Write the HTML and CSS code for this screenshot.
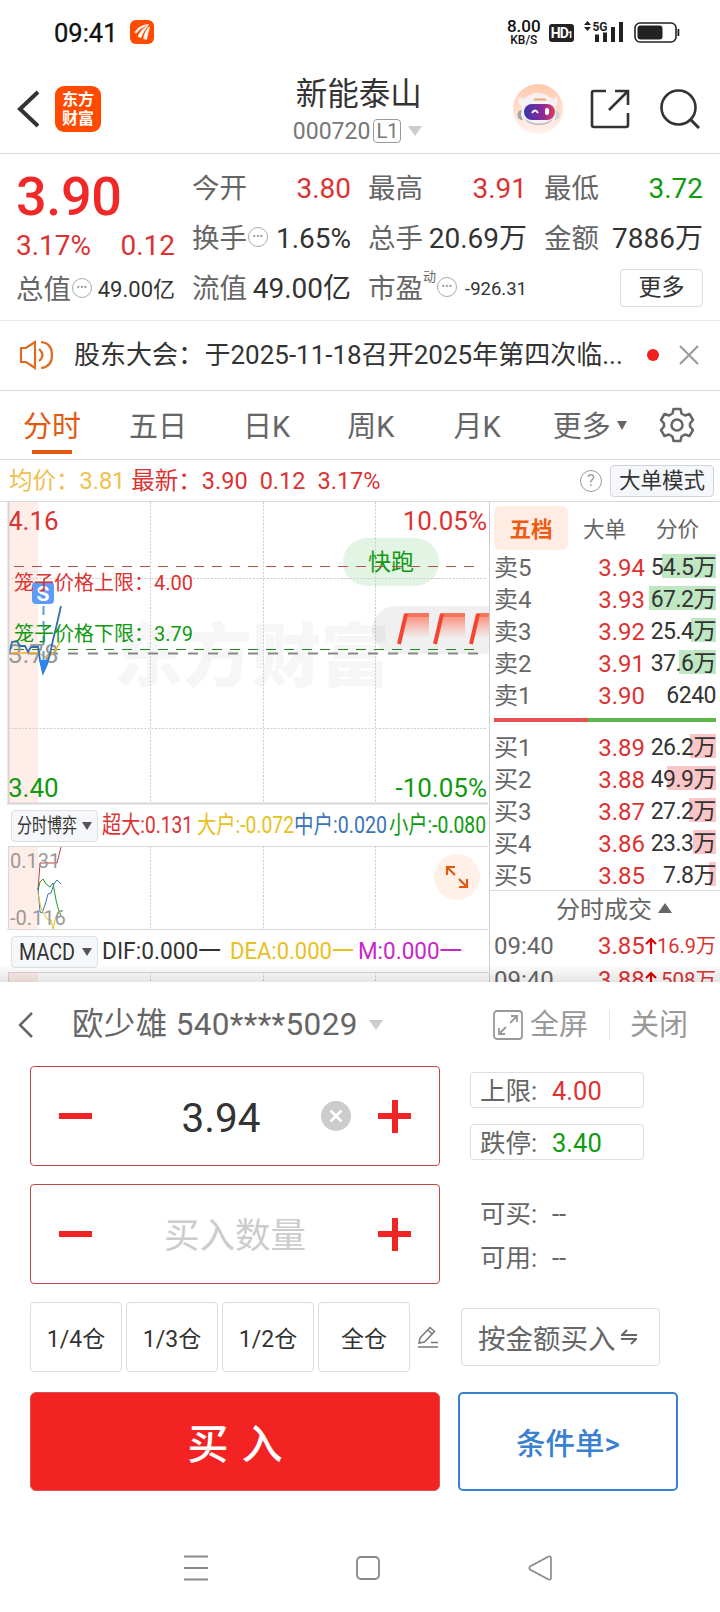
FILE: index.html
```html
<!DOCTYPE html>
<html lang="zh-CN">

<head>
    <meta charset="UTF-8">
    <meta name="viewport" content="width=device-width, initial-scale=1.0">

    <title>新能泰山 000720</title>
    <link rel="stylesheet" href="styles.css">
</head>

<body>

    <div class="status-bar">
        <span class="clock">09:41</span>
        <svg class="status-app" width="24" height="24" viewBox="0 0 24 24">
            <rect width="24" height="24" rx="6" fill="#ff4a00" />
            <path d="M5 12.500C7 8 12 5 18.500 4.500C13 7 9 9 6.500 13ZM8 16.500C10 11.500 14 7.500 18.500 5.500C15 9 12.500 13 11 17.500ZM13.500 18.500C14.500 13 16.500 9 19.500 7C18.800 10 17.800 14.500 16.500 19.500Z" fill="#fff" stroke="#fff" stroke-width="0.600" />
        </svg>
        <div class="net-speed">
            <span class="net-value">8.00</span>
            <span class="net-unit">KB/S</span>
        </div>
        <span class="hd">HD<small>1</small></span>
        <svg class="signal" width="42" height="24" viewBox="0 0 42 24">
            <path d="M4.500 1L8 5H1ZM1 7H8L4.500 11Z" fill="#222" />
            <text x="9.500" y="11" class="signal-text" textLength="15" lengthAdjust="spacingAndGlyphs">5G</text>
            <rect x="12" y="14.500" width="4" height="7.500" fill="#222" />
            <rect x="20" y="12.500" width="4" height="9.500" fill="#222" />
            <rect x="28" y="7" width="4" height="15" fill="#222" />
            <rect x="36" y="2" width="4" height="20" fill="#222" />
        </svg>
        <svg class="battery" width="46" height="22" viewBox="0 0 46 22">
            <rect x="1" y="1" width="41" height="19" rx="5" fill="none" stroke="#222" stroke-width="1.600" />
            <rect x="3.500" y="3.500" width="25" height="14" rx="3" fill="#222" />
            <rect x="43.500" y="7" width="1.800" height="7" fill="#222" />
        </svg>
    </div>

    <div class="header">
        <svg class="back" width="24" height="38" viewBox="0 0 24 38">
            <path d="M21 2L3 19L21 36" fill="none" stroke="#333" stroke-width="4" />
        </svg>
        <div class="logo">东方<br>财富</div>
        <div class="stock">
            <div class="stock-name">新能泰山</div>
            <div class="stock-code">000720<span class="level">L1</span><i class="arrow-down"></i></div>
        </div>
        <svg class="robot" width="50" height="50" viewBox="0 0 50 50">
            <defs>
                <linearGradient id="robotBg" x1="0" y1="0" x2="0" y2="1">
                    <stop offset="0" stop-color="#ffc8ab" />
                    <stop offset="1" stop-color="#fff3ee" />
                </linearGradient>
                <linearGradient id="robotFace" x1="0" y1="0" x2="1" y2="0">
                    <stop offset="0" stop-color="#3a35a8" />
                    <stop offset="0.600" stop-color="#8a2a98" />
                    <stop offset="1" stop-color="#d8405a" />
                </linearGradient>
            </defs>
            <circle cx="25" cy="25" r="25" fill="url(#robotBg)" />
            <ellipse cx="8.500" cy="31" rx="4" ry="5" fill="#a9a5ad" />
            <ellipse cx="42" cy="31" rx="4.500" ry="5" fill="#d5d0d6" />
            <path d="M5 12Q7 16 12 14Q25 4 38 14Q42 16 44 12Q46 19 42 23L43 31Q42 41 26 41Q10 41 8 31L9 23Q4 19 5 12Z" fill="#f5f1f3" />
            <path d="M12 35Q25 44 40 35Q36 41 26 41Q15 41 12 35Z" fill="#bdb8c2" />
            <rect x="11" y="20" width="31" height="16" rx="8" fill="url(#robotFace)" />
            <path d="M19 29Q22 24 25 29" fill="none" stroke="#fff" stroke-width="2" />
            <rect x="32" y="24" width="4" height="7" rx="2" fill="#fff" />
            <path d="M20 16.500L22 14.500H32L34 16.500Z" fill="#e3a56f" />
        </svg>
        <svg class="share" width="40" height="40" viewBox="0 0 40 40">
            <path d="M16 2H4Q2 2 2 4V36Q2 38 4 38H36Q38 38 38 36V24M25 2H38V16M38 2L19 21" fill="none" stroke="#333" stroke-width="2.600" />
        </svg>
        <svg class="search" width="40" height="40" viewBox="0 0 40 40">
            <circle cx="18.500" cy="18.500" r="17" fill="none" stroke="#333" stroke-width="2.600" />
            <path d="M30.500 30.500L39 39" stroke="#333" stroke-width="3" />
        </svg>
    </div>

    <div class="quote">
        <div class="quote-main">
            <div class="price">3.90</div>
            <div class="pair red"><span>3.17%</span><span>0.12</span></div>
            <div class="pair"><label>总值<i class="dots">•••</i></label><span class="mid">49.00亿</span></div>
        </div>
        <div class="quote-col">
            <div class="pair"><label>今开</label><span class="red">3.80</span></div>
            <div class="pair"><label>换手<i class="dots">•••</i></label><span>1.65%</span></div>
            <div class="pair"><label>流值</label><span>49.00亿</span></div>
        </div>
        <div class="quote-col">
            <div class="pair"><label>最高</label><span class="red">3.91</span></div>
            <div class="pair"><label>总手</label><span>20.69万</span></div>
            <div class="pair"><label>市盈<sup>动</sup><i class="dots">•••</i></label><span class="small">-926.31</span></div>
        </div>
        <div class="quote-col">
            <div class="pair"><label>最低</label><span class="green">3.72</span></div>
            <div class="pair"><label>金额</label><span>7886万</span></div>
            <div class="pair pair-end"><button class="more">更多</button></div>
        </div>
    </div>

    <div class="news">
        <svg width="36" height="30" viewBox="0 0 36 30">
            <path d="M2 8H7L16 2V28L7 22H2ZM20 9Q27 15 20 21M22 2Q33 3 33 15Q33 27 22 28" fill="none" stroke="#e06a20" stroke-width="2.200" />
        </svg>
        <span class="news-text">股东大会： 于2025-11-18召开2025年第四次临...</span>
        <i class="news-dot"></i>
        <svg class="news-close" width="20" height="20" viewBox="0 0 20 20">
            <path d="M1 1L19 19M19 1L1 19" stroke="#999" stroke-width="2" />
        </svg>
    </div>

    <div class="tabs">
        <span class="tab active">分时</span>
        <span class="tab">五日</span>
        <span class="tab">日K</span>
        <span class="tab">周K</span>
        <span class="tab">月K</span>
        <span class="tab tab-more">更多<i></i></span>
        <svg class="gear" width="36" height="36" viewBox="0 0 36 36">
            <path d="M14.500 2H21.500L22.500 6.500L26 8.500L30.500 7L34 13L31 16.500V19.500L34 23L30.500 29L26 27.500L22.500 29.500L21.500 34H14.500L13.500 29.500L10 27.500L5.500 29L2 23L5 19.500V16.500L2 13L5.500 7L10 8.500L13.500 6.500Z" fill="none" stroke="#666" stroke-width="2.500" stroke-linejoin="round" />
            <circle cx="18" cy="18" r="5.500" fill="none" stroke="#666" stroke-width="2.500" />
        </svg>
    </div>

    <div class="average">
        <span class="yellow avg-price">均价：3.81</span>
        <span class="red">最新：3.90</span>
        <span class="red">0.12</span>
        <span class="red">3.17%</span>
        <i class="help">?</i>
        <button class="mode">大单模式</button>
    </div>

    <div class="market">
        <div class="charts">
            <svg class="chart" width="489" height="303" viewBox="0 502 489 303">
                <defs>
                    <linearGradient id="fade" x1="0" y1="0" x2="0" y2="1">
                        <stop offset="0" stop-color="#fb8f7e" />
                        <stop offset="1" stop-color="#fb8f7e" stop-opacity="0" />
                    </linearGradient>
                    <g id="slash">
                        <path d="M7 2H31V25H2Z" fill="url(#fade)" />
                        <path d="M7 2H31" stroke="#f7745f" stroke-width="4" />
                        <path d="M1 31L8 1" stroke="#f54530" stroke-width="4" />
                    </g>
                </defs>
                <rect x="9" y="502" width="29" height="301" fill="#ffeee8" />
                <text x="114" y="681" class="watermark" textLength="276">东方财富</text>
                <path d="M150.500 502V803M263.500 502V803M375.500 502V803M8 578.500H487M8 728.500H487" class="grid" />
                <path d="M489 606H396A24 24 0 0 0 396 654H489Z" fill="#000" opacity="0.060" />
                <use href="#slash" x="398" y="613" />
                <use href="#slash" x="434" y="613" />
                <use href="#slash" x="470" y="613" />
                <rect x="343" y="538" width="96" height="48" rx="24" fill="#e2f5e4" />
                <path d="M375.500 538V586M343 578.500H439" class="grid" />
                <text x="391" y="570" text-anchor="middle" class="run">快跑</text>
                <path d="M14 566.500H474" stroke="#b5504c" stroke-dasharray="10 8" />
                <path d="M14 649.500H474" stroke="#1d8a1d" stroke-dasharray="10 8" />
                <path d="M8 653.500H480" stroke="#888" stroke-width="2" stroke-dasharray="10 10" />
                <text x="8" y="530" class="axis red">4.16</text>
                <text x="487" y="530" class="axis red" text-anchor="end">10.05%</text>
                <text x="8" y="663" class="axis gray">3.78</text>
                <text x="8" y="797" class="axis green">3.40</text>
                <text x="487" y="797" class="axis green" text-anchor="end">-10.05%</text>
                <path d="M9 653H39L45 657L51 655L56 649L60 642" fill="none" stroke="#f5b030" stroke-width="1.500" />
                <path d="M9 654L12 642L17 641L20 646L25 646L28 652L31 647H38L40 660L43 673L47 664L50 654L53 640L56 628L61 606" fill="none" stroke="#2f6fb8" stroke-width="1.800" />
                <path d="M39 660H48L43.500 674Z" fill="#2a85f5" />
                <path d="M43.500 606V662" stroke="#5a9be0" stroke-width="2" stroke-dasharray="9 6" />
                <rect x="32" y="582" width="22" height="22" rx="4" fill="#5c9cf7" />
                <text x="43" y="600.500" text-anchor="middle" class="sell-mark">S</text>
                <text x="14" y="589.500" class="cage red">笼子价格上限：4.00</text>
                <text x="14" y="640.500" class="cage green">笼子价格下限：3.79</text>
                <path d="M8.500 502V804M7 803.500H488" class="frame" />
            </svg>

            <div class="indicator">
                <button class="select">
                    <svg width="60" height="26"><text x="0" y="20" textLength="60" lengthAdjust="spacingAndGlyphs">分时博弈</text></svg><i></i>
                </button>
                <svg class="legend" width="388" height="40">
                    <text x="2" y="27" class="red" textLength="91" lengthAdjust="spacingAndGlyphs">超大:0.131</text>
                    <text x="97" y="27" class="gold" textLength="97" lengthAdjust="spacingAndGlyphs">大户:-0.072</text>
                    <text x="194" y="27" class="blue" textLength="93" lengthAdjust="spacingAndGlyphs">中户:0.020</text>
                    <text x="289" y="27" class="green" textLength="97" lengthAdjust="spacingAndGlyphs">小户:-0.080</text>
                </svg>
            </div>

            <svg class="chart" width="489" height="85" viewBox="0 846 489 85">
                <rect x="9" y="846" width="29" height="83" fill="#ffeee8" />
                <path d="M150.500 846V929M263.500 846V929M375.500 846V929" class="grid" />
                <path d="M38 890L40 863H57L61 847" fill="none" stroke="#c83c3c" />
                <path d="M38 890L40 882L43 879L46 884L50 887L53 883L56 900L58 908L61 916" fill="none" stroke="#1d9a1d" />
                <path d="M38 888L40 912L42 913L45 905L48 894L51 893L54 884L57 880L61 884" fill="none" stroke="#3a74b8" />
                <path d="M38 893L41 908L44 914L47 919L51 920L53 929L56 916L61 911" fill="none" stroke="#e8c020" />
                <text x="10" y="868" class="axis-small">0.131</text>
                <text x="10" y="925" class="axis-small">-0.116</text>
                <circle cx="457" cy="877" r="23" fill="#fff0e8" />
                <path d="M447 875V867H455M447 867L455 875M459 879L467 887M459 887H467V879" fill="none" stroke="#dd5a10" stroke-width="2.200" />
                <path d="M8 846.500H488M8.500 846V930M7 929.500H488" class="frame-thin" />
            </svg>

            <div class="indicator">
                <button class="select">
                    <svg width="60" height="26"><text x="2" y="21" textLength="56" lengthAdjust="spacingAndGlyphs" class="macd">MACD</text></svg><i></i>
                </button>
                <svg class="legend" width="388" height="40">
                    <text x="2" y="27" class="black" textLength="119" lengthAdjust="spacingAndGlyphs">DIF:0.000一</text>
                    <text x="130" y="27" class="gold" textLength="124" lengthAdjust="spacingAndGlyphs">DEA:0.000一</text>
                    <text x="258" y="27" class="purple" textLength="104" lengthAdjust="spacingAndGlyphs">M:0.000一</text>
                </svg>
            </div>

            <svg class="chart" width="489" height="11" viewBox="0 972 489 11">
                <rect x="9" y="972" width="29" height="11" fill="#ffeee8" />
                <path d="M150.500 972V983M263.500 972V983M375.500 972V983" class="grid" />
                <path d="M8 972.500H488M8.500 972V983" class="frame-thin" />
            </svg>
        </div>

        <div class="book">
            <div class="book-tabs">
                <span class="active">五档</span>
                <span>大单</span>
                <span>分价</span>
            </div>
            <div class="level-row sell"><span>卖5</span><span class="red">3.94</span><b><i style="width: 54px"></i>54.5万</b></div>
            <div class="level-row sell"><span>卖4</span><span class="red">3.93</span><b><i style="width: 67px"></i>67.2万</b></div>
            <div class="level-row sell"><span>卖3</span><span class="red">3.92</span><b><i style="width: 25px"></i>25.4万</b></div>
            <div class="level-row sell"><span>卖2</span><span class="red">3.91</span><b><i style="width: 37px"></i>37.6万</b></div>
            <div class="level-row sell"><span>卖1</span><span class="red">3.90</span><b>6240</b></div>
            <div class="ratio"><i style="width: 94px"></i></div>
            <div class="level-row buy"><span>买1</span><span class="red">3.89</span><b><i style="width: 26px"></i>26.2万</b></div>
            <div class="level-row buy"><span>买2</span><span class="red">3.88</span><b><i style="width: 49px"></i>49.9万</b></div>
            <div class="level-row buy"><span>买3</span><span class="red">3.87</span><b><i style="width: 27px"></i>27.2万</b></div>
            <div class="level-row buy"><span>买4</span><span class="red">3.86</span><b><i style="width: 23px"></i>23.3万</b></div>
            <div class="level-row buy"><span>买5</span><span class="red">3.85</span><b><i style="width: 7px"></i>7.8万</b></div>
            <div class="deals-title">分时成交<i></i></div>
            <div class="deal"><span>09:40</span><span class="red">3.85</span><svg width="12" height="18" viewBox="0 0 12 18"><path d="M6 17V2M1 7L6 2L11 7" fill="none" stroke="#e00000" stroke-width="2.200" /></svg><em>16.9万</em></div>
            <div class="deal"><span>09:40</span><span class="red">3.88</span><svg width="12" height="18" viewBox="0 0 12 18"><path d="M6 17V2M1 7L6 2L11 7" fill="none" stroke="#e00000" stroke-width="2.200" /></svg><em class="wide">508万</em></div>
        </div>
    </div>

    <div class="trade">
        <div class="account">
            <svg width="16" height="28" viewBox="0 0 16 28">
                <path d="M14 2L2 14L14 26" fill="none" stroke="#666" stroke-width="2.500" />
            </svg>
            <span class="account-name">欧少雄 540****5029</span>
            <i class="arrow-down"></i>
            <svg class="full-icon" width="30" height="30" viewBox="0 0 30 30">
                <rect x="1" y="1" width="28" height="28" rx="3" fill="none" stroke="#999" stroke-width="1.800" />
                <path d="M18 6H24V12M24 6L17 13M6 18V24H12M6 24L13 17" fill="none" stroke="#999" stroke-width="1.800" />
            </svg>
            <span class="full">全屏</span>
            <span class="close">关闭</span>
        </div>

        <div class="order">
            <div class="order-left">
                <div class="stepper">
                    <i class="minus"></i>
                    <span class="value">3.94</span>
                    <svg class="clear" width="30" height="30" viewBox="0 0 30 30">
                        <circle cx="15" cy="15" r="15" fill="#ccc" />
                        <path d="M9.500 9.500L20.500 20.500M20.500 9.500L9.500 20.500" stroke="#fff" stroke-width="2.500" />
                    </svg>
                    <i class="plus"></i>
                </div>
                <div class="stepper">
                    <i class="minus"></i>
                    <span class="value placeholder">买入数量</span>
                    <i class="plus"></i>
                </div>
            </div>
            <div class="order-right">
                <div class="limit"><span>上限:</span><span class="red">4.00</span></div>
                <div class="limit"><span>跌停:</span><span class="green">3.40</span></div>
                <div class="available first"><span>可买:</span><span>--</span></div>
                <div class="available"><span>可用:</span><span>--</span></div>
            </div>
        </div>

        <div class="positions">
            <button>1/4仓</button>
            <button>1/3仓</button>
            <button>1/2仓</button>
            <button>全仓</button>
            <svg class="edit" width="22" height="22" viewBox="0 0 22 22">
                <path d="M1 21H21M14 16.500H21M2 17L3 12L13 1.500L17.500 5.500L7.500 16ZM11 4L15 8" fill="none" stroke="#777" stroke-width="1.500" />
            </svg>
            <button class="by-amount">按金额买入<svg width="16" height="16" viewBox="0 0 16 16">
                    <path d="M16 6H1L6 1M0 10H15L10 15" fill="none" stroke="#666" stroke-width="2" />
                </svg></button>
        </div>

        <div class="actions">
            <button class="buy-btn">买 入</button>
            <button class="cond-btn">条件单&gt;</button>
        </div>
    </div>

    <div class="nav">
        <svg width="24" height="26" viewBox="0 0 24 26">
            <path d="M0 1.500H24M0 13H24M0 24.500H24" stroke="#888" stroke-width="1.800" />
        </svg>
        <svg width="24" height="26" viewBox="0 0 24 26">
            <rect x="1" y="2" width="22" height="22" rx="4" fill="none" stroke="#888" stroke-width="1.800" />
        </svg>
        <svg width="24" height="26" viewBox="0 0 24 26">
            <path d="M2 11.500Q0.500 13 2 14.500L20.500 24.500Q23 25 23 23V3Q23 1 20.500 1.500Z" fill="none" stroke="#888" stroke-width="1.600" />
        </svg>
    </div>

</body>

</html>
```

FILE: styles.css
```css
* {
    box-sizing: border-box;
}

body {
    margin: 0;
    width: 720px;
    height: 1612px;
    overflow: hidden;
    background-color: #fff;
    color: #333;
    font-family: Roboto, 'Noto Sans CJK SC', sans-serif;
}

svg {
    display: block;
    flex-shrink: 0;
}

i,
em {
    font-style: normal;
}

button {
    background-color: #fff;
    font-family: inherit;
    color: #333;
    padding: 0;
    border: 1px solid #ddd;
    border-radius: 4px;
}

.red {
    color: #dc3232;
    fill: #dc3232;
}

.green {
    color: #109a10;
    fill: #109a10;
}

.yellow {
    color: #efc050;
}

.gold {
    fill: #e8c020;
}

.blue {
    fill: #3a74b8;
}

.purple {
    fill: #c828c8;
}

.black {
    fill: #333;
}

.gray {
    fill: #999;
}

/* status bar */
.status-bar {
    display: flex;
    align-items: center;
    height: 64px;
    padding: 0 40px 0 54px;
    color: #111;
}

.clock {
    width: 78px;
    font-size: 25.5px;
    line-height: 26px;
    padding-top: 2px;
    -webkit-text-stroke: 0.3px #111;
}

.net-speed {
    display: flex;
    flex-direction: column;
    align-items: center;
    margin-left: 353px;
    width: 34px;
    font-weight: 500;
}

.net-value {
    font-size: 17px;
    line-height: 15px;
}

.net-unit {
    font-size: 12px;
    line-height: 12px;
}

.hd {
    width: 26px;
    height: 18px;
    margin-left: 8px;
    margin-top: 2px;
    border-radius: 3px;
    background-color: #222;
    color: #fff;
    font-size: 14px;
    font-weight: 700;
    line-height: 19px;
    text-align: center;
    letter-spacing: -1px;
}

.hd small {
    font-size: 9px;
}

.signal {
    margin-left: 9px;
}

.signal-text {
    font-size: 13px;
    font-weight: 700;
    fill: #222;
}

.battery {
    margin-left: 9px;
    margin-top: 1px;
}

/* header */
.header {
    display: flex;
    align-items: center;
    height: 90px;
    padding: 0 20px 0 17px;
    border-bottom: 1px solid #d8d8d8;
}

.logo {
    width: 46px;
    height: 46px;
    margin-left: 14px;
    padding-top: 4px;
    border-radius: 9px;
    background-color: #ff4a00;
    color: #fff;
    font-size: 16px;
    font-weight: 700;
    line-height: 19px;
    text-align: center;
}

.stock {
    width: 260px;
    margin-left: 120px;
    margin-right: 33px;
    padding-top: 7px;
}

.stock-name {
    height: 38px;
    padding-left: 75px;
    font-size: 31.5px;
    line-height: 38px;
}

.stock-code {
    display: flex;
    align-items: center;
    height: 35px;
    padding-left: 72px;
    font-size: 23px;
    line-height: 35px;
    color: #777;
}

.level {
    width: 28px;
    height: 24px;
    margin-left: 3px;
    border: 1.5px solid #999;
    border-radius: 4px;
    font-size: 20px;
    line-height: 22px;
    text-align: center;
}

.arrow-down {
    margin-left: 7px;
    border: 7.5px solid transparent;
    border-top: 10px solid #ccc;
    border-bottom: 0;
}

.share {
    margin-left: 27px;
}

.search {
    margin-left: 30px;
}

/* quote */
.quote {
    display: grid;
    grid-template-columns: 159px 159px 159px 159px;
    column-gap: 17px;
    height: 167px;
    padding: 10px 0 0 16px;
    border-bottom: 1px solid #e8e8e8;
}

.pair {
    display: flex;
    align-items: center;
    justify-content: space-between;
    height: 50px;
    font-size: 28px;
    line-height: 50px;
    white-space: nowrap;
}

.pair-end {
    justify-content: flex-end;
}

.pair label {
    display: flex;
    align-items: center;
    color: #666;
    font-size: 27.5px;
}

.quote-main .pair {
    height: 42px;
    line-height: 44px;
}

.quote-main .price {
    height: 61px;
    color: #f02828;
    font-size: 54px;
    font-weight: 500;
    line-height: 66px;
    letter-spacing: -0.4px;
}

.quote-main .pair:last-child {
    height: 46px;
}

.pair .mid {
    font-size: 22px;
}

.pair .small {
    font-size: 18.5px;
}

.dots {
    width: 20px;
    height: 20px;
    margin-left: 1px;
    margin-top: -4px;
    border: 1.5px solid #aaa;
    border-radius: 50%;
    color: #999;
    font-size: 10px;
    line-height: 18px;
    letter-spacing: 0.3px;
    text-align: center;
}

.pair sup {
    align-self: flex-start;
    font-size: 13px;
    line-height: 26px;
    margin: 0;
}

.more {
    width: 83px;
    height: 38px;
    margin-top: -3px;
    font-size: 23px;
    line-height: 34px;
}

/* news */
.news {
    display: flex;
    align-items: center;
    height: 70px;
    padding: 0 21px 1px 19px;
    border-bottom: 1px solid #d8d8d8;
}

.news-text {
    width: 572px;
    padding-left: 19px;
    font-size: 26px;
    line-height: 40px;
    word-spacing: -6px;
    white-space: nowrap;
}

.news-dot {
    width: 12px;
    height: 12px;
    margin-left: 20px;
    border-radius: 50%;
    background-color: #f02020;
}

.news-close {
    margin-left: 20px;
}

/* period tabs */
.tabs {
    display: flex;
    align-items: center;
    height: 69px;
    padding-left: 23px;
    border-bottom: 1px solid #d8d8d8;
    color: #666;
    font-size: 29px;
}

.tab {
    height: 68px;
    margin-right: 48px;
    line-height: 73px;
    white-space: nowrap;
}

.tabs .tab:nth-child(2) {
    margin-right: 56px;
}

.tabs .tab:nth-child(3) {
    margin-right: 57px;
}

.tabs .tab:nth-child(4) {
    margin-right: 59px;
}

.tabs .tab:nth-child(5) {
    margin-right: 52px;
}

.tab.active {
    color: #e25a10;
    background: linear-gradient(#e65a10, #e65a10) center 59px / 40px 4px no-repeat;
}

.tabs .tab-more {
    display: flex;
    align-items: center;
    margin-right: 32px;
    padding-top: 4px;
}

.tab-more i {
    margin-left: 6px;
    margin-top: -4px;
    border: 5px solid transparent;
    border-top: 9px solid #666;
    border-bottom: 0;
}

/* average line */
.average {
    display: flex;
    align-items: center;
    height: 42px;
    padding: 0 6px 0 9px;
    border-bottom: 1px solid #d8d8d8;
    font-size: 23.5px;
    line-height: 40px;
}

.average span {
    margin-right: 12px;
    white-space: nowrap;
}

.average .avg-price {
    margin-right: 6px;
}

.help {
    width: 22px;
    height: 22px;
    margin-left: auto;
    border: 1.5px solid #999;
    border-radius: 50%;
    color: #999;
    font-size: 16px;
    line-height: 20px;
    text-align: center;
}

.mode {
    width: 104px;
    height: 32px;
    margin-left: 8px;
    border-color: #d0d3da;
    background-color: #f6f7fb;
    font-size: 21.5px;
    line-height: 28px;
}

/* charts */
.market {
    display: flex;
    height: 480px;
    overflow: hidden;
    position: relative;
}

/* shadow of the trade panel over the charts */
.market::after {
    content: '';
    position: absolute;
    left: 0;
    right: 0;
    bottom: 0;
    height: 18px;
    background: linear-gradient(rgba(0, 0, 0, 0), rgba(0, 0, 0, 0.1));
}

.charts {
    width: 490px;
    flex-shrink: 0;
    border-right: 1px solid #d0d0d0;
}

.grid {
    fill: none;
    stroke: #ccc;
    stroke-dasharray: 2 1.5;
}

.frame {
    fill: none;
    stroke: #d5d5d5;
    stroke-width: 2;
}

.frame-thin {
    fill: none;
    stroke: #d8d8d8;
}

.watermark {
    fill: #f6f6f6;
    font-size: 69px;
    font-weight: 900;
}

.run {
    fill: #109a10;
    font-size: 23px;
}

.axis {
    font-size: 26px;
}

.axis-small {
    fill: #999;
    font-size: 20px;
}

.cage {
    font-size: 20px;
}

.sell-mark {
    fill: #fff;
    font-size: 21px;
    font-weight: 700;
}

.indicator {
    display: flex;
    align-items: center;
    height: 41px;
    padding-left: 11px;
}

.select {
    display: flex;
    align-items: center;
    width: 87px;
    height: 32px;
    padding-left: 5px;
    border-color: #dde0e4;
    background-color: #f6f7fa;
    font-size: 20px;
}

.select svg,
.legend {
    overflow: visible;
}

.select text {
    fill: #333;
}

.select .macd {
    font-size: 23px;
}

.select i {
    margin-left: 5px;
    border: 5.5px solid transparent;
    border-top: 8px solid #555;
    border-bottom: 0;
}

.legend {
    margin-left: 2px;
    font-size: 23.5px;
}

/* order book */
.book {
    flex: 1;
    padding: 4px 4px 0;
}

.book-tabs {
    display: flex;
    height: 45px;
    color: #666;
    font-size: 21.5px;
    line-height: 48px;
}

.book-tabs span {
    width: 73px;
    text-align: center;
}

.book-tabs .active {
    width: 74px;
    height: 44px;
    border-radius: 6px;
    background-color: #ffece2;
    color: #f05a10;
    font-weight: 700;
}

.level-row {
    display: grid;
    grid-template-columns: 90px 61px 1fr;
    height: 32px;
    font-size: 24px;
    line-height: 34px;
}

.level-row span:first-child {
    color: #666;
}

.level-row .red {
    text-align: right;
}

.level-row b {
    position: relative;
    z-index: 0;
    font-weight: 400;
    font-size: 23px;
    letter-spacing: -0.5px;
    text-align: right;
}

/* volume bar behind the number */
.level-row b i {
    position: absolute;
    z-index: -1;
    top: 3px;
    right: 0;
    height: 24px;
    background-color: #bfe7c2;
}

.level-row.buy b i {
    background-color: #fbc6c8;
}

.ratio {
    height: 4px;
    margin: 7px 0 9px;
    background-color: #5db84a;
}

.ratio i {
    display: block;
    height: 4px;
    background-color: #e85050;
}

.deals-title {
    display: flex;
    align-items: center;
    height: 39px;
    margin: -1px -4px 0;
    padding-left: 66px;
    border-top: 1px solid #ddd;
    color: #666;
    font-size: 24px;
    line-height: 34px;
}

.deals-title i {
    margin-left: 6px;
    margin-top: -4px;
    border: 7px solid transparent;
    border-top: 0;
    border-bottom: 10px solid #666;
}

.deal {
    display: flex;
    align-items: center;
    height: 34px;
    font-size: 24px;
    line-height: 36px;
    color: #666;
    white-space: nowrap;
}

.deal span:first-child {
    width: 104px;
}

.deal .red {
    width: 47px;
}

.deal em {
    flex: 1;
    color: #dc3232;
    font-size: 20px;
    text-align: right;
}

.deal .wide {
    font-size: 20.5px;
}

/* trade panel */
.trade {
    height: 510px;
    background-color: #fff;
}

.account {
    display: flex;
    align-items: center;
    height: 84px;
    padding: 2px 0 0 18px;
    color: #666;
    font-size: 31.5px;
    line-height: 40px;
    white-space: nowrap;
}

.account-name {
    margin-left: 38px;
    letter-spacing: 0.35px;
}

.account .arrow-down {
    margin-left: 11px;
}

.full-icon {
    margin-left: auto;
}

.full {
    padding: 0 21px 0 7px;
    color: #999;
    font-size: 29px;
}

.close {
    padding: 0 32px 0 20px;
    border-left: 1px solid #e5e5e5;
    color: #999;
    font-size: 29px;
    line-height: 30px;
}

.order {
    display: flex;
    padding-left: 30px;
}

.stepper {
    display: flex;
    align-items: center;
    width: 410px;
    height: 100px;
    margin-bottom: 18px;
    padding: 0 28px;
    border: 1px solid #b84a4a;
    border-radius: 4px;
}

.minus,
.plus {
    width: 33px;
    height: 33px;
    background: linear-gradient(#f02424, #f02424) center / 33px 6px no-repeat;
}

.plus {
    background: linear-gradient(#f02424, #f02424) center / 33px 6px no-repeat, linear-gradient(#f02424, #f02424) center / 6px 33px no-repeat;
}

.value {
    flex: 1;
    padding: 3px 0 0 29px;
    font-size: 40.5px;
    line-height: 96px;
    text-align: center;
}

.clear {
    margin-right: 27px;
}

.value.placeholder {
    padding: 3px 0 0;
    color: #ccc;
    font-size: 35.5px;
}

.order-right {
    padding: 6px 0 0 30px;
    color: #666;
    font-size: 25.5px;
}

.limit {
    display: flex;
    width: 174px;
    height: 36px;
    margin-bottom: 16px;
    padding-left: 9px;
    border: 1px solid #ddd;
    border-radius: 4px;
    line-height: 37px;
}

.limit span:first-child,
.available span:first-child {
    width: 72px;
}

.available {
    display: flex;
    height: 44px;
    padding-left: 10px;
    line-height: 44px;
}

.available.first {
    margin-top: 32px;
}

.positions {
    display: flex;
    align-items: center;
    gap: 4px;
    padding-left: 30px;
}

.positions button {
    width: 92px;
    height: 70px;
    font-size: 23px;
}

.edit {
    margin-left: 3px;
}

.positions .by-amount {
    display: flex;
    align-items: center;
    width: 199px;
    height: 58px;
    margin-left: 18px;
    padding-left: 16px;
    color: #666;
    font-size: 27.5px;
    white-space: nowrap;
}

.by-amount svg {
    margin-left: 5px;
}

.actions {
    display: flex;
    gap: 18px;
    padding: 20px 0 0 30px;
}

.buy-btn {
    width: 410px;
    height: 99px;
    padding-bottom: 2px;
    border: 1px solid #e05050;
    border-radius: 6px;
    background-color: #f42323;
    color: #fff;
    font-size: 41px;
    font-weight: 500;
    word-spacing: 3px;
}

.cond-btn {
    width: 220px;
    height: 99px;
    padding-bottom: 2px;
    border: 2px solid #3a80d2;
    border-radius: 5px;
    color: #3a80d2;
    font-size: 29.5px;
    font-weight: 500;
}

/* system navigation */
.nav {
    display: flex;
    justify-content: center;
    gap: 148px;
    padding-top: 63px;
    padding-left: 16px;
}
```
